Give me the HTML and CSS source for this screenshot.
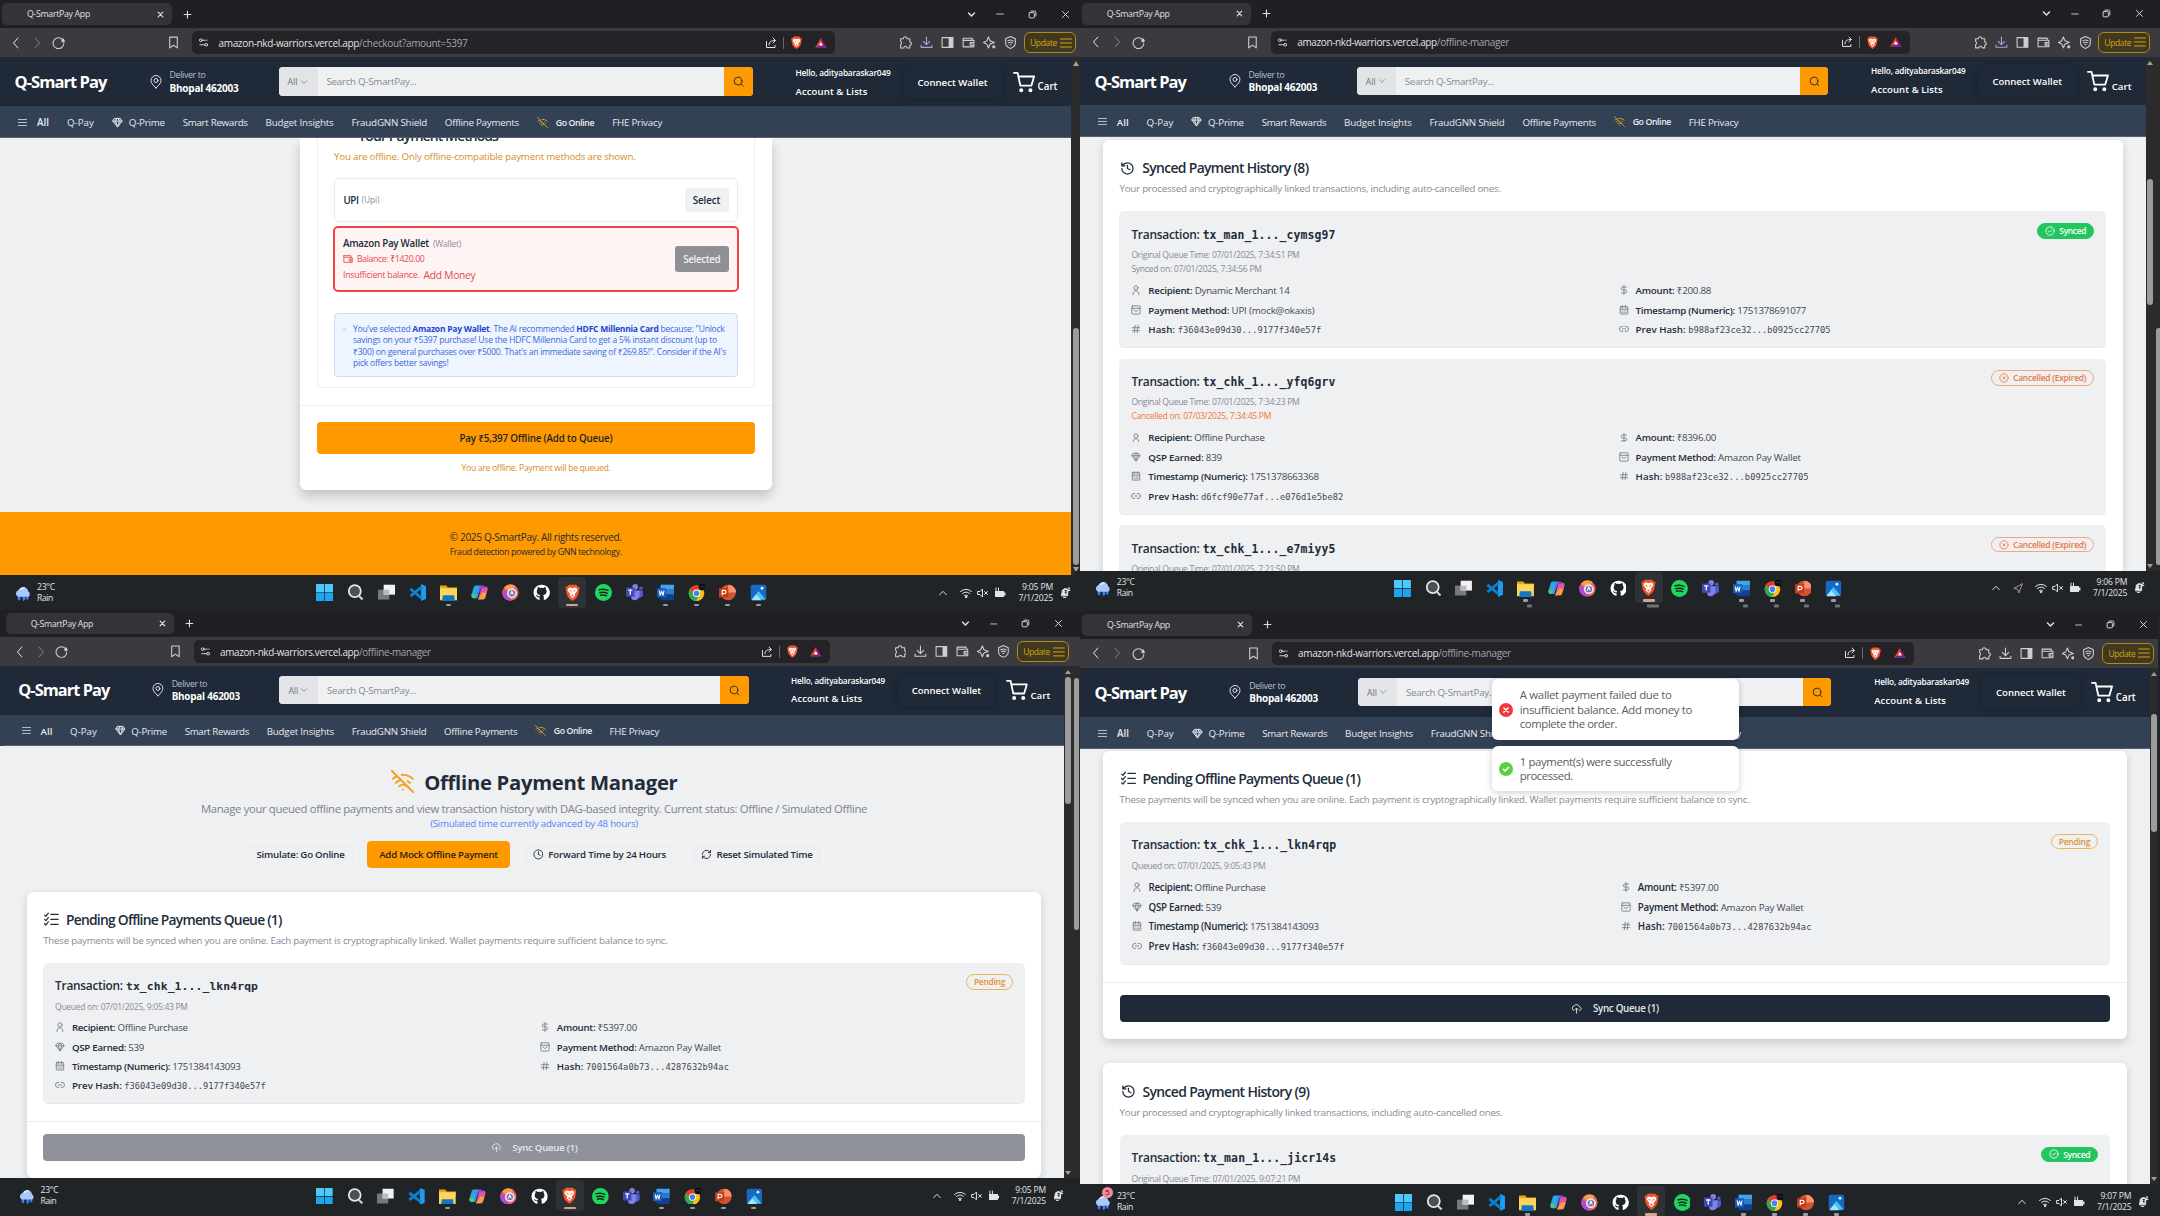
FILE: index.html
```html
<!DOCTYPE html>
<html lang="en">
<head>
<meta charset="utf-8">
<title>Q-SmartPay App</title>
<link rel="stylesheet" href="styles.css">
</head>
<body>
<svg class="sprite" aria-hidden="true">
  <symbol id="x" viewBox="0 0 24 24"><path d="M4 4l16 16M20 4L4 20"/></symbol>
  <symbol id="check" viewBox="0 0 24 24"><path d="M3 13l6 6L21 6"/></symbol>
  <symbol id="plus" viewBox="0 0 24 24"><path d="M12 3v18M3 12h18"/></symbol>
  <symbol id="down" viewBox="0 0 24 24"><path d="M4 8l8 8 8-8"/></symbol>
  <symbol id="up" viewBox="0 0 24 24"><path d="M2 17L12 7l10 10"/></symbol>
  <symbol id="left" viewBox="0 0 24 24"><path d="M16 2L7 12l9 10"/></symbol>
  <symbol id="right" viewBox="0 0 24 24"><path d="M8 2l9 10-9 10"/></symbol>
  <symbol id="min" viewBox="0 0 24 24"><path d="M2 12h20"/></symbol>
  <symbol id="restore" viewBox="0 0 24 24"><rect x="3" y="7" width="14" height="14" rx="2"/><path d="M8 3h10a3 3 0 0 1 3 3v10"/></symbol>
  <symbol id="reload" viewBox="0 0 24 24"><path d="M20.500 8A10 10 0 1 0 22 14M21 5v4"/><circle cx="20.500" cy="9" r="2.200" fill="currentColor"/></symbol>
  <symbol id="bookmark" viewBox="0 0 24 24"><path d="M5 2h14v20l-7-5-7 5z"/></symbol>
  <symbol id="tune" viewBox="0 0 24 24"><circle cx="6" cy="7" r="3"/><path d="M9 7h7"/><circle cx="18" cy="17" r="3"/><path d="M4 17h11M19 7h1"/></symbol>
  <symbol id="share" viewBox="0 0 24 24"><path d="M3 9v12h17v-4M8 16c0-7 5-9 12-9M16 2l5 5-5 5"/></symbol>
  <symbol id="puzzle" viewBox="0 0 24 24"><path d="M3 5h5a3.500 3.500 0 0 1 7 0h5v6a3 3 0 0 1 0 6v5h-5a3 3 0 0 0-6 0H3v-6a3.500 3.500 0 0 0 0-6z"/></symbol>
  <symbol id="dl" viewBox="0 0 24 24"><path d="M12 2v13M6 10l6 6 6-6M2 17v4h20v-4"/></symbol>
  <symbol id="side" viewBox="0 0 24 24"><rect x="2" y="3" width="20" height="18"/><path d="M15 4h6v16h-6z" fill="currentColor"/></symbol>
  <symbol id="wal" viewBox="0 0 24 24"><path d="M2 4h17v4M2 4v16h20V8H2M22 12h-7v5h7M17.500 14.500h1"/></symbol>
  <symbol id="leo" viewBox="0 0 24 24"><path d="M10 2l3 7 8 3-8 3-3 7-3-7-6-3 6-3z"/><circle cx="20" cy="20" r="2" fill="currentColor"/></symbol>
  <symbol id="vpn" viewBox="0 0 24 24"><path d="M12 1l9 4v8c0 5-4 8-9 10-5-2-9-5-9-10V5z"/><path d="M7 9q5-3 10 0M8.500 12.500q3.500-2 7 0M11 16h2"/></symbol>
  <symbol id="menu" viewBox="0 0 24 24"><path d="M1 4h22M1 12h22M1 20h22"/></symbol>
  <symbol id="brave" viewBox="0 0 24 24"><path fill="#fb542b" d="M7 1h10l2 2 3 2-1 4c0 7-3 11-9 15C6 20 3 16 3 9L2 5l3-2z"/><path fill="#fff" d="M6 6l3-1 3 1 3-1 3 1 1 3-4 5 1 2-4 4-4-4 1-2-4-5z"/><path fill="#fb542b" d="M7 8l3 1 1 3zM17 8l-3 1-1 3zM10 16l2-1 2 1-2 2z"/></symbol>
  <symbol id="bat" viewBox="0 0 24 24"><path fill="#ff4724" d="M12 2L0 22h0l12-7z"/><path fill="#9e1f63" d="M12 2l12 20-12-7z"/><path fill="#662d91" d="M0 22h24l-12-8z"/><path fill="#fff" d="M12 10l4 7H8z"/></symbol>
  <symbol id="pin" viewBox="0 0 24 28"><path d="M12 26C6 20 2 16 2 11a10 10 0 0 1 20 0c0 5-4 9-10 15z"/><circle cx="12" cy="11" r="4"/></symbol>
  <symbol id="mag" viewBox="0 0 24 24"><circle cx="11" cy="11" r="8.500"/><path d="M17 17l5 5"/></symbol>
  <symbol id="cart" viewBox="0 0 24 24"><path d="M1 2h4l3 14h12l3-10H6"/><circle cx="9" cy="21" r="1.200" fill="currentColor"/><circle cx="19" cy="21" r="1.200" fill="currentColor"/></symbol>
  <symbol id="gem" viewBox="0 0 24 24"><path d="M6 3h12l4 6-10 13L2 9zM2 9h20M11 3L8 9l4 13 4-13-3-6"/></symbol>
  <symbol id="nowifi" viewBox="0 0 24 24"><path d="M1 1l22 22M12 20h.01M8.500 16.400a5 5 0 0 1 7 0M5 12.900a10 10 0 0 1 5.200-2.700M19 12.900a10 10 0 0 0-2-1.500M2 8.800a15 15 0 0 1 4.200-2.600M22 8.800a15 15 0 0 0-11.300-3.800"/></symbol>
  <symbol id="hist" viewBox="0 0 24 24"><path d="M3 12a9 9 0 1 0 9-9 9.700 9.700 0 0 0-6.700 2.700L3 8M3 3v5h5M12 7v5l4 2"/></symbol>
  <symbol id="todo" viewBox="0 0 24 24"><path d="M1 5l2 2 4-5M1 19l2 2 4-5M11 4h12M11 12h12M11 20h12M1 12l2 2 4-5"/></symbol>
  <symbol id="user" viewBox="0 0 24 24"><circle cx="12" cy="7" r="5"/><path d="M5 23c0-6 2-9 7-9s7 3 7 9"/></symbol>
  <symbol id="usd" viewBox="0 0 24 24"><path d="M12 1v22M18 5H9a3.500 3.500 0 0 0 0 7h6a3.500 3.500 0 0 1 0 7H6"/></symbol>
  <symbol id="pay" viewBox="0 0 24 24"><rect x="2" y="2" width="20" height="20" rx="2"/><path d="M2 8h20M7 12l3 3h4l3-3"/></symbol>
  <symbol id="cal" viewBox="0 0 24 24"><rect x="3" y="4" width="18" height="18" rx="1"/><path d="M3 10h18M8 1v6M16 1v6M7 14h1M12 14h1M16 14h1M7 18h1M12 18h1M16 18h1"/></symbol>
  <symbol id="hash" viewBox="0 0 24 24"><path d="M3 9h18M3 16h18M10 3L8 21M17 3l-2 18"/></symbol>
  <symbol id="link" viewBox="0 0 24 24"><path d="M9 18H7A6 6 0 0 1 7 6h2M15 6h2a6 6 0 0 1 0 12h-2M8 12h8"/></symbol>
  <symbol id="ok" viewBox="0 0 24 24"><circle cx="12" cy="12" r="10"/><path d="M8 12l3 3 5-6"/></symbol>
  <symbol id="no" viewBox="0 0 24 24"><circle cx="12" cy="12" r="10"/><path d="M9 9l6 6M15 9l-6 6"/></symbol>
  <symbol id="cloud" viewBox="0 0 24 24"><path d="M6 17A6 6 0 0 1 7 6a7 7 0 0 1 12 3c4 1 4 7 0 8M12 22V12M8 15l4-4 4 4"/></symbol>
  <symbol id="clock" viewBox="0 0 24 24"><circle cx="12" cy="12" r="10"/><path d="M12 6v6l4 2"/></symbol>
  <symbol id="sync" viewBox="0 0 24 24"><path d="M3 12a9 9 0 0 1 15-6.700L21 8M21 3v5h-5M21 12a9 9 0 0 1-15 6.700L3 16M3 21v-5h5"/></symbol>
  <symbol id="rain" viewBox="0 0 24 24"><path fill="#3b82f6" d="M5 15h4l-1 7-3-1zM11 15h4v6l-3 2zM17 14h3l-1 7-3-1z"/><path fill="#a9c8fb" d="M5 17a5 5 0 0 1 1-9 7 7 0 0 1 13 2 4 4 0 0 1 0 7z"/><path fill="#d5e3fd" d="M7 8a6 6 0 0 1 9-3c-3 0-3 4-9 3z"/></symbol>
  <symbol id="win" viewBox="0 0 24 24"><path fill="#4cc8fb" d="M0 0h11.500v11.500H0zM12.500 0H24v11.500H12.500z"/><path fill="#1ea5f0" d="M0 12.500h11.500V24H0zM12.500 12.500H24V24H12.500z"/></symbol>
  <symbol id="find" viewBox="0 0 24 24"><circle cx="11" cy="10" r="8.500" fill="#4b5056" stroke="#e5e7eb" stroke-width="2.500"/><path d="M17 17l5 5" stroke="#cfd2d6" stroke-width="3"/></symbol>
  <symbol id="tasks" viewBox="0 0 24 24"><path fill="#77797d" d="M0 8h16v14H0z"/><path fill="#f2f2f2" d="M8 1h16v14H8z"/><path fill="#b9bbbe" d="M8 8h8v7H8z"/></symbol>
  <symbol id="code" viewBox="0 0 24 24"><path fill="#1f9cf0" d="M17 0l7 3v18l-7 3z"/><path d="M18 4L2 17M18 20L2 7" stroke="#0b7fd0" stroke-width="4"/></symbol>
  <symbol id="files" viewBox="0 0 24 24"><path fill="#e8a70c" d="M0 2h9l2 3h13v8H0z"/><path fill="#ffd45c" d="M0 6h24v17H0z"/><path fill="#1576c4" d="M4 16h16l1 8H3z"/></symbol>
  <symbol id="copilot" viewBox="0 0 24 24"><path fill="#2aa5e8" d="M6 2h8L9 20H5c-4 0-5-2-4-6L4 4z"/><path fill="#4fc96b" d="M1 14h6l-1 6H4c-3 0-4-2-3-6z"/><path fill="#e255a1" d="M15 4h5c4 0 4 3 3 6l-3 10-2 2h-8z"/><path fill="#f7a23c" d="M16 12h6l-3 9-9 1 3-5z"/><path fill="#7c4de0" d="M13 2h5l2 4h-6l-3 8H9z"/></symbol>
  <symbol id="orb" viewBox="0 0 24 24"><circle cx="12" cy="12" r="11.500" fill="#f0625a"/><path fill="#b04bd0" d="M1 8A11.500 11.500 0 0 0 12 23.500L12 12z"/><path fill="#f5a14a" d="M3 5a11.500 11.500 0 0 1 16-2l-7 9z"/><circle cx="14" cy="13" r="7" fill="#e9e3f2"/><circle cx="14" cy="13" r="4.500" fill="#776eb0"/><path d="M12 15l2-5 2 5" stroke="#fff" stroke-width="1.500"/></symbol>
  <symbol id="git" viewBox="0 0 24 24"><path fill="#fff" d="M12 1a11 11 0 0 0-3.500 21.500c.6 0 .8-.3.800-.6v-3c-3 .5-4-1-4.500-2.400l-1-1.200c1.500-.3 2.200 1 2.800 1.800 1 1 2 .7 2.900.2 0-.7.400-1.300.8-1.600-3-.4-5-1.700-5-5.200 0-1.500.5-2.500 1.200-3.300-.2-.8-.2-2 .2-2.900 1.200 0 2.200.7 3 1.300a10 10 0 0 1 5 0c1-.6 2-1.300 3-1.300.5 1 .5 2.200.3 2.900.8.800 1.200 1.800 1.200 3.300 0 3.500-2.200 4.800-5 5.200.6.600 1 1.300 1 2.300v4c0 .3.200.6.800.5A11 11 0 0 0 12 1z"/></symbol>
  <symbol id="spot" viewBox="0 0 24 24"><circle cx="12" cy="12" r="12" fill="#1ed760"/><path d="M5 8.500q8-2.500 14 1M6 12.500q7-2 12 1M7 16q5.500-1.500 10 1" stroke="#17231b" stroke-width="2"/></symbol>
  <symbol id="teams" viewBox="0 0 24 24"><circle cx="13" cy="4" r="4" fill="#7b83eb"/><circle cx="21" cy="6" r="2.500" fill="#5059c9"/><path fill="#5059c9" d="M17 9h7v7q-2 5-7 4z"/><path fill="#7b83eb" d="M7 9h12v8q-2 6-7 6t-5-6z"/><path fill="#4048b5" d="M0 5h12v13H0z"/><path d="M3 8.500h6M6 8.500V15" stroke="#fff" stroke-width="1.800"/></symbol>
  <symbol id="word" viewBox="0 0 24 24"><path fill="#41a5ee" d="M5 1h19v7H5z"/><path fill="#2b7cd3" d="M5 8h19v7H5z"/><path fill="#103f91" d="M5 15h19v8H5z"/><path fill="#185abd" d="M0 6h13v13H0z"/><path d="M3 9l1.500 7L6.500 10l2 6L10 9" stroke="#fff" stroke-width="1.500"/></symbol>
  <symbol id="chrome" viewBox="0 0 24 24"><circle cx="12" cy="13" r="11" fill="#fbc116"/><path fill="#e33b2e" d="M2.500 7.500A11 11 0 0 1 21.500 8H12L8 15z"/><path fill="#2da94f" d="M2.500 7.500L8.500 16l6.500 1-3.500 7A11 11 0 0 1 2.500 7.500z"/><circle cx="12" cy="13" r="5.200" fill="#fff"/><circle cx="12" cy="13" r="4" fill="#3f83f3"/><circle cx="20" cy="4" r="5" fill="#0c1015"/><path d="M17 4q3-2 6 1" stroke="#1e3a52" stroke-width="1.500"/></symbol>
  <symbol id="ppt" viewBox="0 0 24 24"><circle cx="13" cy="12" r="11" fill="#d35230"/><path fill="#ff8f6b" d="M13 1a11 11 0 0 1 11 11H13z"/><path fill="#c13b1b" d="M0 6h13v13H0z"/><path d="M4.500 16V9h3q2.500 0 2.500 2.200T7.500 13.500h-3" stroke="#fff" stroke-width="1.600"/></symbol>
  <symbol id="photo" viewBox="0 0 24 24"><rect x="1" y="1" width="22" height="22" rx="3" fill="#1769c2"/><path fill="#49c5f4" d="M2 22L12 10l10 12z"/><path fill="#a6e4fb" d="M2 23l7-8 7 8z"/><circle cx="17" cy="6" r="2" fill="#d8f2ff"/></symbol>
  <symbol id="wifi" viewBox="0 0 24 24"><path d="M1 9q11-9 22 0M5 13q7-6 14 0M9 17q3-2.500 6 0"/><circle cx="12" cy="20" r="1.500" fill="currentColor"/></symbol>
  <symbol id="mute" viewBox="0 0 24 24"><path d="M2 9h4l5-5v16l-5-5H2zM15 9l6 6M21 9l-6 6"/></symbol>
  <symbol id="batt" viewBox="0 0 24 24"><path fill="currentColor" stroke="none" d="M2 8h18v3h3v6h-3v3H2z"/><path d="M4 2v6M9 2v6"/></symbol>
  <symbol id="bell" viewBox="0 0 24 24"><path fill="currentColor" d="M5 17L7 6q5-5 11-1l-1 12zM9 21h4"/><path stroke="#202427" d="M12 7h3l-3 5h3"/><path d="M18 2h4l-4 5h4"/></symbol>
  <symbol id="loc" viewBox="0 0 24 24"><path d="M22 2L2 13l9 2 3 8z"/></symbol>
</svg>
<main class="desktop" id="desktop"></main>
<script src="app.js"></script>
</body>
</html>
```
FILE: styles.css
```css
* { box-sizing: border-box; }
body { margin: 0; background: #202427; }
.sprite { position: absolute; width: 0; height: 0; }
svg { display: block; flex: none; fill: none; stroke: currentColor; stroke-width: 2; stroke-linecap: round; stroke-linejoin: round; }
.art { stroke: none; stroke-linecap: butt; }
.desktop { position: relative; width: 2160px; height: 1216px; overflow: hidden; background: #202427; font-family: "Open Sans", "Noto Sans", sans-serif; }
.t { display: inline-block; white-space: pre; flex: none; padding-top: 1.500px; }
.tip .t, .toast .t, .weather .t, .time .t { padding-top: 0; }

/* windows on the desktop */
.window { position: absolute; width: 1080px; display: flex; flex-direction: column; font-size: 9.8px; line-height: 1.2; }
.w1 { left: 0; top: 0; height: 610px; }
.w2 { left: 1086px; top: 0; height: 613px; zoom: .9945; }
.w3 { zoom: .9895; left: 4px; top: 616.200px; height: 613px; }
.w4 { zoom: .9985; left: 1081.600px; top: 611.700px; height: 607px; }
.edge { position: absolute; width: 8px; background: #2b2b2b; display: flex; flex-direction: column; align-items: center; }
.edge.a { left: 2152px; top: 57px; height: 514px; }
.edge.b { left: 1072px; top: 609px; height: 607px; }
.edge.c { left: 2154px; top: 0; height: 57px; width: 6px; background: linear-gradient(#1f1f24 28px, #3b3b3f 28px); }
.edge .thumb { width: 5px; }
.edge.a .thumb { margin-left: 4px; }

/* browser chrome */
.tabs { height: 28px; flex: none; background: #1f1f24; display: flex; align-items: center; padding: 0 10px 0 2px; color: #e0e0e2; }
.tab { width: 170px; height: 22px; border-radius: 5px; background: #333338; display: flex; align-items: center; justify-content: space-between; padding: 0 8px 0 25px; font-size: 8.800px; }
.tab svg { stroke-width: 4; }
.tabs > .plus { margin-left: 11px; stroke-width: 3; }
.controls { margin-left: auto; display: flex; align-items: center; gap: 24px; }
.controls svg { stroke-width: 2.500; }
.controls svg:first-child { stroke-width: 4; margin-right: -4px; }
.bar { height: 29px; flex: none; background: #3b3b3f; display: flex; align-items: center; padding: 0 4px 0 10px; color: #cfcfd2; }
.bar .mark { margin: 0 12px 0 102px; }
.bar .back { margin-right: 9px; color: #e6e6e8; } .bar .fwd { margin-right: 9px; color: #85858a; }
.url { width: 643px; height: 23px; border-radius: 5px; background: #232328; display: flex; align-items: center; padding: 0 8px 0 6px; font-size: 10px; color: #e2e2e4; }
.url .t { margin-left: 9.500px; } .url i { font-style: normal; color: #a5a5aa; }
.url .end { margin-left: auto; display: flex; align-items: center; gap: 6px; }
.url .sep { width: 1px; height: 12px; background: #68686c; }
.url .end .art + .art { margin-left: 6px; }
.tools { margin-left: auto; display: flex; align-items: center; gap: 8px; }
.tools .busy { color: #a5a3dc; }
.update { margin-left: -1px; width: 52px; height: 21px; border: 1px solid #ad8d17; border-radius: 6px; background: #41391f; color: #cfa614; display: flex; align-items: center; justify-content: space-between; padding: 0 3px 0 5px; font-size: 8.600px; }

/* viewport and scrollbar */
.main { height: 517.500px; flex: none; display: flex; }
.view { width: 1071.400px; display: flex; flex-direction: column; overflow: hidden; background: #eff0f2; }
.scroll { width: 8.600px; background: #2b2b2b; display: flex; flex-direction: column; align-items: center; justify-content: space-between; padding: 4px 0 3px; }
.arrow { width: 0; height: 0; border: 3.500px solid transparent; border-top: 0; border-bottom: 5px solid #a0a0a0; flex: none; }
.arrow.d { transform: rotate(180deg); }
.track { flex: 1; width: 6px; }
.thumb { width: 6px; border-radius: 3px; background: #9c9c9c; }

/* site header */
.head { height: 49px; flex: none; background: #1f2937; color: #fff; display: flex; align-items: center; padding-left: 14.500px; font-weight: 600; }
.logo { font-size: 16.500px; font-weight: 700; }
.head .pin { margin: 0 8px 0 43px; color: #dfe3e8; }
.deliver { width: 109px; display: flex; flex-direction: column; align-items: flex-start; line-height: 12.500px; font-size: 10px; font-weight: 700; }
.deliver .t, .acct .t { padding-top: 0; }
.deliver .sm { font-size: 8.800px; font-weight: 400; color: #b9c0ca; }
.search { width: 474px; height: 28.500px; border-radius: 4px; overflow: hidden; background: #eff0f2; display: flex; align-items: center; color: #858b93; font-weight: 400; }
.all { width: 39px; height: 100%; background: #e3e4e8; display: flex; align-items: center; gap: 2px; padding-left: 9px; font-size: 8.800px; color: #6b7280; margin-right: 9px; }
.go { margin-left: auto; width: 28.500px; height: 100%; background: #ff9900; color: #1f2937; display: grid; place-items: center; }
.acct { margin-left: 43px; width: 108px; display: flex; flex-direction: column; align-items: flex-start; line-height: 19px; font-size: 9.600px; }
.acct .sm { font-size: 8.300px; }
.connect { width: 98px; height: 32px; border-radius: 5px; box-shadow: 0 1px 5px #17202c88; display: flex; align-items: center; padding-left: 14px; font-size: 9.600px; }
.head .cart { margin: 0 3px 0 11px; } .head .cart + .t { padding-top: 11px; }
.nav { height: 32px; flex: none; background: #334155; border-bottom: 1px solid #55606e; color: #e8eaee; display: flex; align-items: center; padding: 2px 0 0 18px; }
.nav > * { margin-right: 17.900px; } .nav b { font-weight: 600; }
.nav .burger { margin-right: 10px; } .nav .gem { margin-right: 6px; fill: #ffffff55; } .nav .off { color: #d9a520; margin-right: 8px; }
.nav .online { font-size: 8.800px; font-weight: 600; }
.page { flex: 1; min-height: 0; overflow: hidden; display: flex; flex-direction: column; color: #222c3a; }

/* checkout */
.checkout { width: 472px; height: 352px; flex: none; margin-left: 300px; background: #fff; border-radius: 0 0 6px 6px; box-shadow: 0 6px 12px #00000030; }
.methods { margin: 0 17px; height: 249.500px; border: solid #eceef0; border-width: 0 1px 1px; border-radius: 0 0 5px 5px; padding: 0 16px; display: flex; flex-direction: column; }
.mtitle { font-size: 14px; font-weight: 600; height: 10px; line-height: 12px; margin: -10px 0 0 24px; flex: none; padding-bottom: 20px; }
.warn { color: #d98d2b; }
.methods .warn { font-size: 9.800px; line-height: 14px; height: 14px; }
.option { height: 43.500px; border: 1px solid #eaecee; border-radius: 4px; margin-top: 16px; padding: 0 8.500px; display: flex; align-items: center; gap: 3px; flex: none; }
.option b, .picked b { font-weight: 600; }
.gray { color: #8a919b; font-size: 8.600px; }
.btn { margin-left: auto; height: 24px; border-radius: 3px; background: #eff1f3; font-weight: 600; display: grid; place-items: center; width: 44px; }
.btn.sel { width: 54.500px; height: 26px; background: #8e9096; color: #f1f1f3; }
.picked { height: 66px; flex: none; margin: 4.500px -1px 0; border: 2px solid #ef4444; border-radius: 5px; background: #fef4f3; display: flex; align-items: center; padding: 0 8px; }
.lines { display: flex; flex-direction: column; }
.line { display: flex; align-items: center; gap: 4px; height: 15.500px; color: #e5484d; font-size: 8.800px; font-weight: 500; }
.line b { color: #222c3a; font-size: 9.800px; } .line .add { font-size: 10.200px; }
.tip { margin-top: 20.500px; height: 64px; flex: none; border: 1px solid #c9defc; border-radius: 4px; background: #eef5ff; color: #3a68dc; font-size: 8.500px; line-height: 11.350px; padding: 9.500px 0 0 8px; display: flex; gap: 6px; }
.tip .o { width: 4px; font-size: 6px; color: #93b4ef; padding-top: 1px; }
.tip b { color: #1d45cf; }
.payzone { margin-top: 17px; border-top: 1px solid #eceef0; padding: 16.500px 17px 0; display: flex; flex-direction: column; align-items: center; }
.paybtn { width: 100%; height: 32px; border-radius: 4px; background: #ff9900; color: #1f2326; font-weight: 600; display: grid; place-items: center; margin-bottom: 7.500px; }
.payzone .warn { font-size: 8.700px; }
.foot { margin-top: auto; height: 62.500px; flex: none; background: #ff9900; display: flex; flex-direction: column; align-items: center; justify-content: center; line-height: 13.500px; padding-top: 3px; font-size: 10px; }
.foot .sm { font-size: 8.800px; }

/* offline manager */
.card { margin: 3px 23px 0; background: #fff; border-radius: 6px; box-shadow: 0 4px 9px #00000026; padding: 0 16.700px; flex: none; }
.card h2 { margin: 0; padding-top: 18px; height: 38px; font-size: 14px; font-weight: 600; display: flex; align-items: center; gap: 7px; }
.card h2 svg { margin-left: 1px; }
.sub { height: 33.700px; padding-top: 4px; color: #858b95; }
.tx { background: #eff0f2; border-radius: 5px; padding: 12.500px 12px 8.500px; margin-bottom: 10.300px; border-bottom: 1px solid #e6e8ea; }
.txhead { height: 20px; display: flex; align-items: center; justify-content: space-between; margin-bottom: 4px; font-size: 12px; font-weight: 600; }
.mono { font-family: "DejaVu Sans Mono", "Liberation Mono", monospace; font-size: 11.500px; font-weight: 600; }
.meta { height: 14px; line-height: 14px; font-size: 8.600px; color: #858b95; }
.meta.red { color: #f0792f; }
.badge { height: 15.500px; border-radius: 8px; border: 1px solid; padding: 0 7px; font-size: 8.500px; display: flex; align-items: center; gap: 4px; margin-top: -6px; font-weight: 600; }
.badge .t { padding-top: 1px; }
.badge.Synced { background: #22c55e; border-color: #22c55e; color: #fff; }
.badge.Pending { color: #e0932f; border-color: #f0b458; }
.badge.Cancelled { color: #ea7a42; border-color: #f3a67c; }
.facts { margin-top: 5px; display: grid; grid-template-columns: 1fr 1fr; column-gap: 12px; }
.fact { height: 19.600px; display: flex; align-items: center; gap: 7px; color: #3f4957; }
.fact svg { color: #6f7885; }
.fact b { font-weight: 600; color: #222c3a; } .fact .mono { font-size: 8.800px; font-weight: 400; }
.cfoot { margin: 17px -16.700px 0; border-top: 1px solid #eceef0; padding: 11.500px 16.700px 17px; }
.tx:has(+ .cfoot) { margin-bottom: 0; }
.syncbtn { height: 27.800px; border-radius: 4px; background: #1f2937; color: #e4e7ea; font-weight: 600; display: flex; align-items: center; justify-content: center; gap: 11px; }
.syncbtn.dim { background: #8f9399; }
.hero { flex: none; height: 147px; display: flex; flex-direction: column; align-items: center; padding-top: 20.500px; }
.hero h1 { margin: 0; height: 30px; font-size: 20.500px; display: flex; align-items: center; gap: 10px; }
.hero h1 svg { color: #f5a01f; }
.hero .lead { height: 19px; line-height: 22px; font-size: 11.400px; color: #7c828c; }
.hero .note { height: 26px; line-height: 17px; color: #4f86f7; }
.actions { display: flex; gap: 11px; padding-left: 1px; }
.act { height: 28px; border: 1px solid #f5f6f8; border-radius: 4px; padding: 0 11px; display: flex; align-items: center; gap: 5px; font-weight: 600; }
.act.hot { background: #ff9900; border-color: #ff9900; color: #27221a; }
.w3 .card { margin-top: 0; } .w4 .card { margin-top: 2px; } .w4 .card + .card { margin-top: 24px; }

/* extend bands of the offset windows to the desktop edge */
.w3 .tabs { box-shadow: -5px 0 #1f1f24, 8px 0 #1f1f24; } .w3 .bar { box-shadow: -5px 0 #3b3b3f, 8px 0 #3b3b3f; }
.w3 .main { box-shadow: -5px 0 #eff0f2; } .w3 .view { overflow: visible; } .w3 .page { overflow: hidden; }
.w3 .head { box-shadow: -5px 0 #1f2937; } .w3 .nav { box-shadow: -5px 0 #334155; }

/* toasts */
.toast { position: absolute; left: 412.500px; width: 247.500px; background: #fff; border-radius: 6px; box-shadow: 0 2px 7px #00000030; display: flex; align-items: center; gap: 7px; padding: 1px 0 0 7px; color: #5b5d61; font-size: 11.400px; line-height: 14.600px; }
.toast.one { top: 68px; height: 61.500px; } .toast.two { top: 135.300px; height: 45.500px; }
.toast svg { background: #f0393c; color: #fff; border-radius: 50%; padding: 3.500px; stroke-width: 5; }
.toast.two svg { background: #5bd142; }

/* taskbar */
.task { flex: 1; min-height: 0; background: #202427; display: flex; align-items: flex-start; color: #e2e4e6; font-size: 8.600px; line-height: 11px; box-shadow: -5px 0 #202427, 8px 0 #202427; }
.weather { position: relative; width: 294px; height: 36px; display: flex; align-items: center; gap: 5px; padding-left: 14px; }
.alert { position: absolute; left: 22px; top: 3px; width: 11px; height: 11px; border-radius: 50%; background: #f58a94; color: #401015; text-align: center; font-size: 7.500px; }
.apps { display: flex; padding-left: 14.500px; }
.app { width: 31px; height: 36px; display: grid; place-items: center; position: relative; }
.app.on::after, .app.live::after { content: ""; position: absolute; bottom: 4.500px; width: 5px; height: 2.500px; border-radius: 1px; background: #9a9da0; }
.app.live { background: #2e3235; border-radius: 4px; width: 28px; height: 31px; margin: 2px 1.500px; }
.app.live::after { width: 12px; bottom: 1.500px; background: #d9a08e; }
.w2 .app::after { box-shadow: 4px 5.500px #6f7275; }
.w2 .task > * { margin-top: -1px; }
.tray { margin-left: auto; margin-right: 9px; height: 36px; display: flex; align-items: center; gap: 5px; }
.tray .up { margin-right: 8px; stroke-width: 3; } .tray .loc { margin-right: 7px; color: #c9aba0; }
.time { width: 42px; text-align: right; margin-right: 1px; }
```
FILE: app.js
```javascript
// Icon from the sprite; `c` adds classes, h defaults to w.
const ic = (id, w, c = '', h = w) => `<svg class="${c}" width="${w}" height="${h}"><use href="#${id}"/></svg>`;
const art = (id, w) => ic(id, w, 'art');
// Text run tracked to a given width.
const t = (html, w, c = '', tag = 'span') => `<${tag} class="t ${c}" data-w="${w}">${html}</${tag}>`;

const chrome = (path, w, busy) => `
<div class="tabs"><div class="tab">${t('Q-SmartPay App', 63)}${ic('x', 7, '')}</div>${ic('plus', 9, 'plus')}
<div class="controls">${ic('down', 9)}${ic('min', 8)}${ic('restore', 9)}${ic('x', 9)}</div></div>
<div class="bar">${ic('left', 12, 'back')}${ic('right', 12, 'fwd')}${ic('reload', 13)}${ic('bookmark', 13, 'mark')}
<div class="url">${ic('tune', 11)}${t(`amazon-nkd-warriors.vercel.app<i>${path}</i>`, w)}<div class="end">${ic('share', 12)}<span class="sep"></span>${art('brave', 13)}${art('bat', 12)}</div></div>
<div class="tools">${ic('puzzle', 13)}${ic('dl', 13, busy ? 'busy' : '')}${ic('side', 13)}${ic('wal', 13)}${ic('leo', 13)}${ic('vpn', 13)}<div class="update">${t('Update', 27)}${ic('menu', 12)}</div></div></div>`;

const site = `
<div class="head">${t('Q-Smart Pay', 92, 'logo')}${ic('pin', 12, 'pin', 14)}
<div class="deliver">${t('Deliver to', 36, 'sm')}${t('Bhopal 462003', 69)}</div>
<div class="search"><div class="all">${t('All', 10)}${ic('down', 8)}</div>${t('Search Q-SmartPay...', 90)}<div class="go">${ic('mag', 11)}</div></div>
<div class="acct">${t('Hello, adityabaraskar049', 95, 'sm')}${t('Account &amp; Lists', 72)}</div>
<div class="connect">${t('Connect Wallet', 70)}</div>${ic('cart', 22, 'cart')}${t('Cart', 20)}</div>
<div class="nav">${ic('menu', 9, 'burger')}${t('All', 12, '', 'b')}${t('Q-Pay', 27)}${ic('gem', 11, 'gem')}${t('Q-Prime', 36)}${t('Smart Rewards', 65)}${t('Budget Insights', 68)}${t('FraudGNN Shield', 75.5)}${t('Offline Payments', 74)}${ic('nowifi', 11, 'off')}${t('Go Online', 38.500, 'online')}${t('FHE Privacy', 50)}</div>`;

const taskbar = ({ time, tw = 31, loc, alert }) => `
<div class="task"><div class="weather">${art('rain', 18)}${alert ? '<span class="alert">5</span>' : ''}<div>${t('23°C', 18)}<br>${t('Rain', 16)}</div></div>
<div class="apps">${['win', 'find', 'tasks', 'code', 'files.on', 'copilot', 'orb', 'git', 'brave.live', 'spot', 'teams', 'word.on', 'chrome.on', 'ppt.on', 'photo.on'].map(a => {
  const [id, s = ''] = a.split('.');
  return `<div class="app ${s}">${art(id, 17)}</div>`;
}).join('')}</div>
<div class="tray">${ic('up', 8, 'up')}${loc ? ic('loc', 10, 'loc') : ''}${ic('wifi', 12)}${ic('mute', 12)}${ic('batt', 12)}<div class="time">${t(time, tw)}<br>${t('7/1/2025', 34.500)}</div>${ic('bell', 12)}</div></div>`;

const win = (cls, path, uw, thumb, page, bar, over = '') => `
<section class="window ${cls}">${chrome(path, uw, cls < 'w3')}
<div class="main"><div class="view">${site}<div class="page">${page}</div></div>
<div class="scroll"><i class="arrow"></i><div class="track"><div class="thumb" style="margin-top:${thumb[0]}px;height:${thumb[1]}px"></div></div><i class="arrow d"></i></div></div>
${taskbar(bar)}${over}</section>`;

const icons = { Recipient: 'user', Amount: 'usd', 'Payment Method': 'pay', 'Timestamp (Numeric)': 'cal', Hash: 'hash', 'Prev Hash': 'link', 'QSP Earned': 'gem' };
const fact = ([k, v, w]) => `<div class="fact">${ic(icons[k], 10)}${t(`<b>${k}:</b> ${k.endsWith('Hash') ? `<span class="mono">${v}</span>` : v}`, w)}</div>`;
const tx = (id, status, sw, metas, facts) => `
<div class="tx"><div class="txhead"><span>${t('Transaction:', 68.500)} ${t(id, 133.500, 'mono')}</span><span class="badge ${status.split(' ')[0]}">${status[0] === 'S' ? ic('ok', 10) : status[0] === 'C' ? ic('no', 10) : ''}${t(status, sw)}</span></div>
${metas.map(([m, w, c = '']) => `<div class="meta ${c}">${t(m, w)}</div>`).join('')}
<div class="facts">${facts.map(fact).join('')}</div></div>`;

const card = (icon, title, tw, sub, sw, body) => `<div class="card"><h2>${ic(icon, 15)}${t(title, tw)}</h2><div class="sub">${t(sub, sw)}</div>${body}</div>`;
const pending = dim => card('todo', 'Pending Offline Payments Queue (1)', 218, 'These payments will be synced when you are online. Each payment is cryptographically linked. Wallet payments require sufficient balance to sync.', 631,
  tx('tx_chk_1..._lkn4rqp', 'Pending', 31.500, [['Queued on: 07/01/2025, 9:05:43 PM', 134]], [
    ['Recipient', 'Offline Purchase', 117], ['Amount', '₹5397.00', 81], ['QSP Earned', '539', 73], ['Payment Method', 'Amazon Pay Wallet', 166],
    ['Timestamp (Numeric)', '1751384143093', 170.500], ['Hash', '7001564a0b73...4287632b94ac', 174], ['Prev Hash', 'f36043e09d30...9177f340e57f', 196]])
  + `<div class="cfoot"><div class="syncbtn ${dim}">${ic('cloud', 11)}${t('Sync Queue (1)', 66)}</div></div>`);
const history = (n, list) => card('hist', `Synced Payment History (${n})`, 167, 'Your processed and cryptographically linked transactions, including auto-cancelled ones.', 383.500, list);

const checkout = `
<div class="checkout"><div class="methods"><div class="mtitle">${t('Your Payment Methods', 140)}</div>
<div class="warn">${t('You are offline. Only offline-compatible payment methods are shown.', 301.500)}</div>
<div class="option">${t('UPI', 15, '', 'b')}${t('(Upi)', 18, 'gray')}<div class="btn">${t('Select', 27.500)}</div></div>
<div class="picked"><div class="lines"><div class="line">${t('Amazon Pay Wallet', 86, '', 'b')}${t('(Wallet)', 28, 'gray')}</div>
<div class="line">${ic('wal', 10)}${t('Balance: ₹1420.00', 67.500)}</div><div class="line">${t('Insufficient balance.', 76.500)}${t('Add Money', 52, 'add')}</div></div>
<div class="btn sel">${t('Selected', 37)}</div></div>
<div class="tip"><span class="o">c</span><div>${t('You\'ve selected <b>Amazon Pay Wallet</b>. The AI recommended <b>HDFC Millennia Card</b> because: "Unlock', 371.500)}<br>${t('savings on your ₹5397 purchase! Use the HDFC Millennia Card to get a 5% instant discount (up to', 364)}<br>${t('₹300) on general purchases over ₹5000. That\'s an immediate saving of ₹269.85!". Consider if the AI\'s', 373)}<br>${t('pick offers better savings!', 95.500)}</div></div></div>
<div class="payzone"><div class="paybtn">${t('Pay ₹5,397 Offline (Add to Queue)', 153)}</div>${t('You are offline. Payment will be queued.', 149, 'warn')}</div></div>
<div class="foot">${t('© 2025 Q-SmartPay. All rights reserved.', 172)}${t('Fraud detection powered by GNN technology.', 172, 'sm')}</div>`;

const historyPage = history(8,
  tx('tx_man_1..._cymsg97', 'Synced', 27, [['Original Queue Time: 07/01/2025, 7:34:51 PM', 169], ['Synced on: 07/01/2025, 7:34:56 PM', 131]], [
    ['Recipient', 'Dynamic Merchant 14', 142], ['Amount', '₹200.88', 76], ['Payment Method', 'UPI (mock@okaxis)', 167], ['Timestamp (Numeric)', '1751378691077', 171.500],
    ['Hash', 'f36043e09d30...9177f340e57f', 174], ['Prev Hash', 'b988af23ce32...b0925cc27705', 196]])
  + tx('tx_chk_1..._yfq6grv', 'Cancelled (Expired)', 73.500, [['Original Queue Time: 07/01/2025, 7:34:23 PM', 169], ['Cancelled on: 07/03/2025, 7:34:45 PM', 140.500, 'red']], [
    ['Recipient', 'Offline Purchase', 117], ['Amount', '₹8396.00', 81], ['QSP Earned', '839', 74], ['Payment Method', 'Amazon Pay Wallet', 166],
    ['Timestamp (Numeric)', '1751378663368', 171.500], ['Hash', 'b988af23ce32...b0925cc27705', 174], ['Prev Hash', 'd6fcf90e77af...e076d1e5be82', 196]])
  + tx('tx_chk_1..._e7miyy5', 'Cancelled (Expired)', 73.500, [['Original Queue Time: 07/01/2025, 7:21:50 PM', 169]], []));

const hero = `
<div class="hero"><h1>${ic('nowifi', 24)}${t('Offline Payment Manager', 256)}</h1>
<div class="lead">${t('Manage your queued offline payments and view transaction history with DAG-based integrity. Current status: Offline / Simulated Offline', 673)}</div>
<div class="note">${t('(Simulated time currently advanced by 48 hours)', 210)}</div>
<div class="actions"><div class="act">${t('Simulate: Go Online', 89)}</div><div class="act hot">${t('Add Mock Offline Payment', 120)}</div>
<div class="act">${ic('clock', 11)}${t('Forward Time by 24 Hours', 119)}</div><div class="act">${ic('sync', 11)}${t('Reset Simulated Time', 97)}</div></div></div>`;

const toasts = `
<div class="toast one">${ic('x', 14)}<div>${t('A wallet payment failed due to', 152)}<br>${t('insufficient balance. Add money to', 172.500)}<br>${t('complete the order.', 97.500)}</div></div>
<div class="toast two">${ic('check', 14)}<div>${t('1 payment(s) were successfully', 152)}<br>${t('processed.', 53)}</div></div>`;

const desktop = document.getElementById('desktop');
desktop.innerHTML = `
<div class="edge a"><div class="thumb" style="margin-top:271px;height:237px"></div></div>
<div class="edge b"><div class="thumb" style="margin-top:69px;height:252px"></div></div>
<div class="edge c"></div>`
  + win('w1', '/checkout?amount=5397', 249, [262, 237], checkout, { time: '9:05 PM' })
  + win('w2', '/offline-manager', 213, [115, 127], historyPage, { time: '9:06 PM', loc: true })
  + win('w3', '/offline-manager', 213, [3, 128], hero + pending('dim'), { time: '9:05 PM' })
  + win('w4', '/offline-manager', 213, [38, 119], pending('') + history(9,
      tx('tx_man_1..._jicr14s', 'Synced', 27, [['Original Queue Time: 07/01/2025, 9:07:21 PM', 169]], [])), { time: '9:07 PM', alert: true }, toasts);

// Track every text run to its design width.
document.querySelectorAll('.window').forEach(w => {
  const k = w.getBoundingClientRect().width / 1080;
  w.querySelectorAll('.t').forEach(el => {
    const gap = el.dataset.w - el.getBoundingClientRect().width / k;
    el.style.letterSpacing = (gap / el.textContent.length).toFixed(4) + 'px';
  });
});
```
